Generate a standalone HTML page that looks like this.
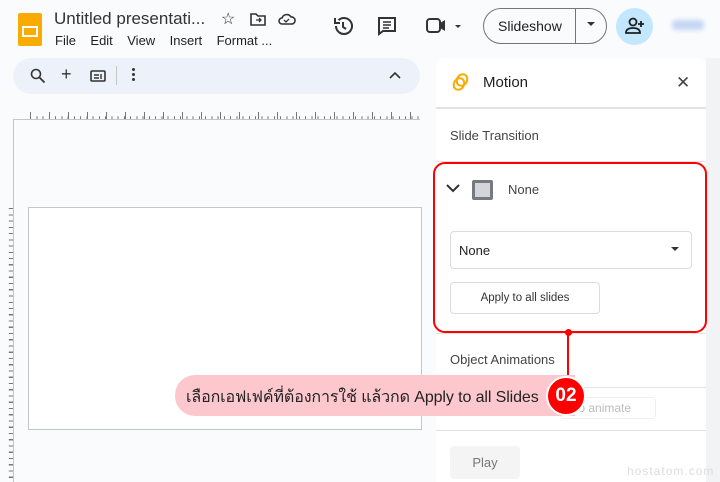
<!DOCTYPE html>
<html><head><meta charset="utf-8"><style>
*{margin:0;padding:0;box-sizing:border-box}
body{width:720px;height:482px;overflow:hidden;background:#f9fbfd;font-family:"Liberation Sans",Arial,sans-serif;position:relative;color:#1f1f1f}
.a{position:absolute}
.t{font-size:13px}
</style></head><body>
<div class="a" style="left:18px;top:13px;width:24px;height:33px;background:#f9ab00;border-radius:2px"></div>
<div class="a" style="left:22px;top:26px;width:16px;height:11px;border:2px solid #fff"></div>
<div class="a" style="left:54px;top:9px;font-size:17px;color:#333">Untitled presentati...</div>
<div class="a t" style="left:55px;top:33px">File&nbsp;&nbsp;&nbsp; Edit&nbsp;&nbsp;&nbsp; View&nbsp;&nbsp;&nbsp; Insert&nbsp;&nbsp;&nbsp; Format ...</div>
<div class="a" style="left:221px;top:9px;font-size:16px">☆</div>
<svg class="a" style="left:250px;top:12px" width="16" height="14"><path d="M1 2h5l2 2h7v9H1z" fill="none" stroke="#333" stroke-width="1.6"/><path d="M6 8h5M9 6l2 2-2 2" fill="none" stroke="#333" stroke-width="1.3"/></svg>
<svg class="a" style="left:278px;top:12px" width="18" height="14"><path d="M4 12a3 3 0 0 1 0-6 5 5 0 0 1 9-1 3.5 3.5 0 0 1 1 7z" fill="none" stroke="#333" stroke-width="1.6"/><path d="M6 8l2 2 3-3" fill="none" stroke="#333" stroke-width="1.3"/></svg>
<svg class="a" style="left:332px;top:15px" width="22" height="22"><path d="M4 11a8 8 0 1 0 2.5-5.8" fill="none" stroke="#333" stroke-width="2"/><path d="M3 3v5h5" fill="none" stroke="#333" stroke-width="2"/><path d="M11 7v5l3 2" fill="none" stroke="#333" stroke-width="2"/></svg>
<svg class="a" style="left:377px;top:16px" width="20" height="20"><path d="M2 2h16v13H6l-4 3z" fill="none" stroke="#333" stroke-width="2"/><path d="M6 6h8M6 9h8M6 12h6" stroke="#333" stroke-width="1.5"/></svg>
<svg class="a" style="left:426px;top:17px" width="36" height="18"><rect x="1" y="2" width="13" height="13" rx="3" fill="none" stroke="#333" stroke-width="2"/><path d="M14 6l5-3v11l-5-3z" fill="#333"/><path d="M29 8l3 3 3-3z" fill="#333"/></svg>
<div class="a" style="left:483px;top:8px;width:124px;height:36px;border:1px solid #747775;border-radius:18px"></div>
<div class="a" style="left:575px;top:9px;width:1px;height:34px;background:#747775"></div>
<div class="a" style="left:498px;top:18px;font-size:14px">Slideshow</div>
<svg class="a" style="left:587px;top:22px" width="8" height="6"><path d="M0 0h8L4 4z" fill="#333"/></svg>
<div class="a" style="left:616px;top:8px;width:37px;height:37px;border-radius:50%;background:#c2e7ff"></div>
<svg class="a" style="left:625px;top:17px" width="20" height="18"><circle cx="8" cy="5" r="3.5" fill="none" stroke="#1f1f1f" stroke-width="1.8"/><path d="M1 16c0-4 3-5 7-5s7 1 7 5z" fill="none" stroke="#1f1f1f" stroke-width="1.8"/><path d="M16 4v6M13 7h6" stroke="#1f1f1f" stroke-width="1.8"/></svg>
<div class="a" style="left:672px;top:20px;width:32px;height:10px;background:#c5d6f5;border-radius:4px;filter:blur(2px)"></div>
<div class="a" style="left:13px;top:58px;width:407px;height:36px;background:#edf2fa;border-radius:18px"></div>
<svg class="a" style="left:30px;top:68px" width="16" height="16"><circle cx="6" cy="6" r="4.5" fill="none" stroke="#333" stroke-width="1.6"/><path d="M9.5 9.5l5 5" stroke="#333" stroke-width="1.8"/></svg>
<div class="a" style="left:61px;top:64px;font-size:18px;color:#333">+</div>
<svg class="a" style="left:90px;top:70px" width="16" height="12"><rect x="1" y="1" width="14" height="10" rx="1" fill="none" stroke="#333" stroke-width="1.6"/><path d="M4 5h5M4 8h5M11 4v5" stroke="#333" stroke-width="1.4"/></svg>
<div class="a" style="left:116px;top:66px;width:1px;height:19px;background:#c4c7c5"></div>
<div class="a" style="left:132px;top:68px;width:3px;height:3px;background:#333;border-radius:50%;box-shadow:0 5px #333,0 10px #333"></div>
<svg class="a" style="left:389px;top:72px" width="12" height="8"><path d="M1 6l5-5 5 5" fill="none" stroke="#333" stroke-width="1.6"/></svg>
<div class="a" style="left:13px;top:119px;width:1px;height:363px;background:#c4c7c5"></div>
<div class="a" style="left:13px;top:119px;width:407px;height:1px;background:#c4c7c5"></div>
<div class="a" style="left:30px;top:112px;width:390px;height:7px;background:repeating-linear-gradient(90deg,#777 0 1px,transparent 1px 6.25px);clip-path:polygon(0 60%,100% 60%,100% 100%,0 100%)"></div>
<div class="a" style="left:30px;top:112px;width:390px;height:7px;background:repeating-linear-gradient(90deg,#777 0 1px,transparent 1px 19px)"></div>
<div class="a" style="left:6px;top:208px;width:7px;height:274px;background:repeating-linear-gradient(180deg,#777 0 1px,transparent 1px 6.25px);clip-path:polygon(40% 0,100% 0,100% 100%,40% 100%)"></div>
<div class="a" style="left:28px;top:207px;width:394px;height:223px;background:#fff;border:1px solid #c4c7c5"></div>
<div class="a" style="left:436px;top:58px;width:270px;height:424px;background:#fff;border-radius:8px 8px 0 0"></div>
<div class="a" style="left:706px;top:58px;width:14px;height:424px;background:#f1f3f4"></div>
<svg class="a" style="left:450px;top:72px" width="20" height="22"><ellipse cx="12" cy="8" rx="5" ry="6" fill="none" stroke="#f9ab00" stroke-width="2" transform="rotate(30 12 8)"/><ellipse cx="9" cy="12" rx="5" ry="6" fill="none" stroke="#f9ab00" stroke-width="2" transform="rotate(30 9 12)"/></svg>
<div class="a" style="left:483px;top:74px;font-size:15px">Motion</div>
<div class="a" style="left:676px;top:73px;font-size:17px;color:#444">✕</div>
<div class="a" style="left:436px;top:107px;width:270px;height:2px;background:#e3e3e3"></div>
<div class="a t" style="left:450px;top:128px;color:#444">Slide Transition</div>
<div class="a" style="left:436px;top:161px;width:270px;height:1px;background:#e3e3e3"></div>
<svg class="a" style="left:446px;top:184px" width="14" height="10"><path d="M1 1l6 6 6-6" fill="none" stroke="#333" stroke-width="2"/></svg>
<div class="a" style="left:472px;top:180px;width:21px;height:20px;border:3px solid #757a80;border-radius:2px;background:#d3d5d8"></div>
<div class="a t" style="left:508px;top:182px;color:#444">None</div>
<div class="a" style="left:450px;top:231px;width:242px;height:38px;border:1px solid #dadce0;border-radius:4px"></div>
<div class="a t" style="left:459px;top:243px">None</div>
<svg class="a" style="left:671px;top:247px" width="8" height="4"><path d="M0 0h8L4 4z" fill="#333"/></svg>
<div class="a" style="left:450px;top:282px;width:150px;height:32px;border:1px solid #dadce0;border-radius:4px;font-size:11.5px;text-align:center;line-height:30px;color:#333">Apply to all slides</div>
<div class="a" style="left:433px;top:162px;width:274px;height:171px;border:2px solid #f00;border-radius:12px"></div>
<div class="a" style="left:436px;top:333px;width:270px;height:1px;background:#e3e3e3"></div>
<div class="a" style="left:565px;top:329px;width:7px;height:7px;background:#f00;border-radius:50%"></div>
<div class="a" style="left:567px;top:333px;width:2px;height:45px;background:#f00"></div>
<div class="a t" style="left:450px;top:352px;color:#444">Object Animations</div>
<div class="a" style="left:436px;top:387px;width:270px;height:1px;background:#e3e3e3"></div>
<div class="a" style="left:560px;top:397px;width:96px;height:22px;border:1px solid #eee;border-radius:4px;font-size:12px;color:#bbb;line-height:20px;padding-left:14px">to animate</div>
<div class="a" style="left:436px;top:430px;width:270px;height:1px;background:#e3e3e3"></div>
<div class="a" style="left:450px;top:446px;width:70px;height:33px;background:#f4f4f4;border-radius:4px;font-size:13px;color:#777;text-align:center;line-height:33px">Play</div>
<div class="a" style="left:627px;top:464px;font-size:12px;color:#ddd;letter-spacing:1px">hostatom.com</div>
<div class="a" style="left:175px;top:375px;width:400px;height:41px;background:#fdc8cd;border-radius:20px 0 0 20px"></div>
<div class="a" style="left:186px;top:385px;font-size:16px;color:#222;font-family:'Liberation Sans','DejaVu Sans',sans-serif;white-space:nowrap;letter-spacing:-0.1px">เลือกเอฟเฟค์ที่ต้องการใช้ แล้วกด Apply to all Slides</div>
<div class="a" style="left:546px;top:376px;width:40px;height:40px;border-radius:50%;background:#f00;border:2px solid #fff;color:#fff;font-weight:bold;font-size:19px;text-align:center;line-height:36px">02</div>
</body></html>
